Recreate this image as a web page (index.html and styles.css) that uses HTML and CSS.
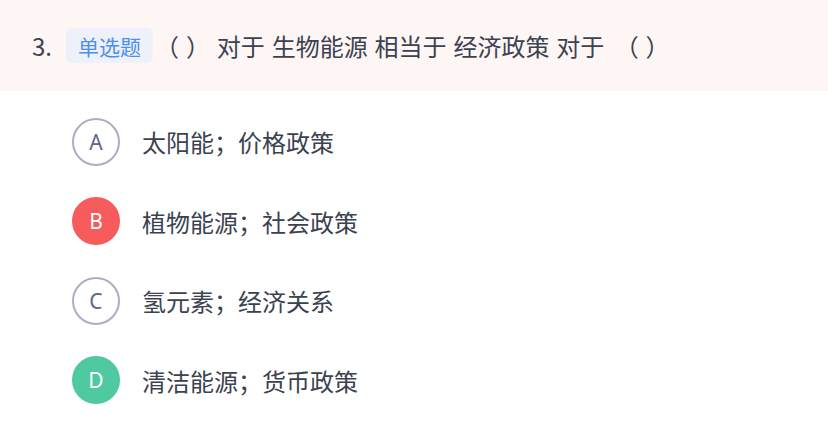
FILE: index.html
```html
<!DOCTYPE html>
<html lang="zh-CN">
<head>
<meta charset="utf-8">
<title>单选题</title>
<link rel="stylesheet" href="styles.css">
</head>
<body>
<div class="question">
  <div class="q-head">
    <span class="q-num">3.</span>
    <span class="q-tag">单选题</span>
    <span class="q-text">（ ） 对于 生物能源 相当于 经济政策 对于 <span class="blank">（ ）</span></span>
  </div>
  <ul class="options">
    <li class="option"><span class="badge">A</span><span class="opt-text">太阳能；价格政策</span></li>
    <li class="option"><span class="badge wrong">B</span><span class="opt-text">植物能源；社会政策</span></li>
    <li class="option"><span class="badge">C</span><span class="opt-text">氢元素；经济关系</span></li>
    <li class="option"><span class="badge right">D</span><span class="opt-text">清洁能源；货币政策</span></li>
  </ul>
</div>
</body>
</html>
```
FILE: styles.css
```css
html, body {
  margin: 0;
  padding: 0;
  background: #ffffff;
}
body {
  font-family: "Noto Sans CJK SC", "Noto Sans", sans-serif;
  color: #3b4250;
}
.q-head {
  height: 91px;
  background: #fef5f5;
  display: flex;
  align-items: center;
  padding-left: 32px;
  box-sizing: border-box;
}
.q-num {
  font-size: 24px;
  margin-right: 14px;
}
.q-tag {
  width: 87px;
  height: 35px;
  border-radius: 6px;
  background: #eef1f9;
  color: #4b8ff0;
  font-size: 21px;
  display: flex;
  align-items: center;
  justify-content: center;
  margin-right: 2px;
}
.q-text {
  font-size: 24px;
  white-space: pre;
  word-spacing: 1.5px;
}
.blank {
  margin-left: 3.5px;
}
.options {
  list-style: none;
  margin: 0;
  padding: 11px 0 0 72px;
}
.option {
  display: flex;
  align-items: center;
  height: 79.5px;
}
.badge {
  width: 48px;
  height: 48px;
  box-sizing: border-box;
  border-radius: 50%;
  border: 2px solid #a9aec3;
  color: #5c6785;
  font-family: "Noto Sans", sans-serif;
  font-size: 21px;
  display: flex;
  align-items: center;
  justify-content: center;
  margin-right: 22px;
}
.badge.wrong {
  background: #f75b5b;
  border-color: #f75b5b;
  color: #ffffff;
}
.badge.right {
  background: #4fc99f;
  border-color: #4fc99f;
  color: #ffffff;
}
.opt-text {
  font-size: 24px;
}
```
